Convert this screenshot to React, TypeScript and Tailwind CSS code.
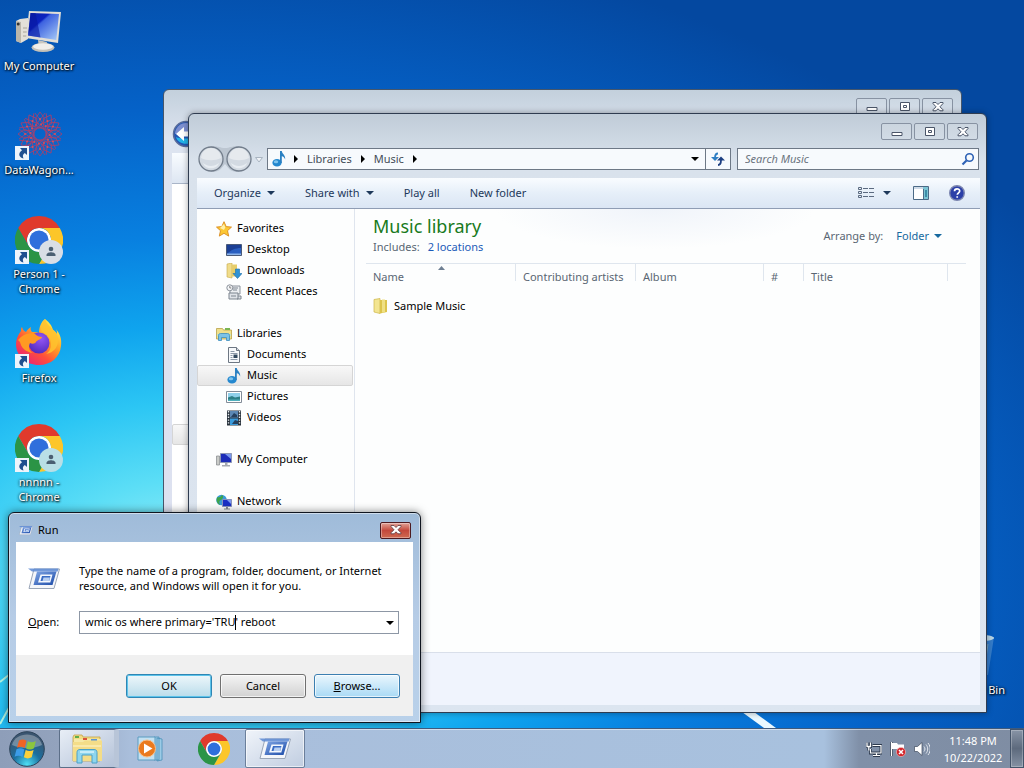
import { ReactNode, useId } from "react";

const ChromeIcon = ({ className = "" }: { className?: string }) => (
  <svg viewBox="0 0 48 48" className={className}>
    <circle cx="24" cy="24" r="12" fill="#fff" />
    <path
      d="M24,12H44.7812a23.9939,23.9939,0,0,0-41.5639.0029L13.6079,30l.0093-.0024A11.9852,11.9852,0,0,1,24,12Z"
      fill="#e03a2c"
    />
    <path
      d="M34.3913,30.0029,24.0007,48A23.994,23.994,0,0,0,44.78,12.0031H23.9989l-.0025.0093A11.985,11.985,0,0,1,34.3913,30.0029Z"
      fill="#fcc629"
    />
    <path
      d="M13.6086,30.0031,3.218,12.006A23.994,23.994,0,0,0,24.0025,48L34.3931,30.0029l-.0067-.0068a11.9852,11.9852,0,0,1-20.7778.007Z"
      fill="#2b9446"
    />
    <circle cx="24" cy="24" r="9.6" fill="#2f6fdc" />
  </svg>
);

const ChromeProfileIcon = ({ tint }: { tint: string }) => (
  <div className="relative h-12 w-12">
    <ChromeIcon className="h-12 w-12" />
    <svg viewBox="0 0 24 24" className="absolute right-0 bottom-0 h-6 w-6">
      <circle cx="12" cy="12" r="12" fill={tint} />
      <circle cx="12" cy="9" r="2.3" fill="#4b5f72" />
      <path d="M7.5 16v-1.2c0-1.7 3-2.5 4.5-2.5s4.500.8 4.500 2.500V16z" fill="#4b5f72" />
    </svg>
  </div>
);

const ComputerIcon = () => {
  const id = useId();
  return (
    <svg viewBox="0 0 48 48" className="h-12 w-12">
      <defs>
        <linearGradient id={id} x1="0" y1="0" x2="1" y2="1">
          <stop offset="0" stopColor="#0a1fa8" />
          <stop offset=".35" stopColor="#0b22c0" />
          <stop offset=".4" stopColor="#3d62e0" />
          <stop offset="1" stopColor="#a9cdf8" />
        </linearGradient>
      </defs>
      <path d="M1 13l4-2 8-1v21l-7 4-5-2z" fill="#e3e0d8" />
      <path d="M1 13l5 1v21l-5-2z" fill="#b9b5aa" />
      <circle cx="3.200" cy="16" r="1.500" fill="#333" />
      <path d="M8 20h4M8 24h4M8 28h4" stroke="#a8a498" />
      <path d="M23 32l9 2-1 6h-7z" fill="#c9c6be" />
      <ellipse cx="28" cy="39.500" rx="11.500" ry="4.500" fill="#c4c1b8" />
      <ellipse cx="28" cy="38.500" rx="10" ry="3.300" fill="#f0eeea" />
      <path d="M14 3l32 1-3 31-32-5z" fill="#e0ded8" />
      <path d="M15.500 5l28.500 1-2.700 26-28.300-4.500z" fill={`url(#${id})`} />
      <path d="M15.500 5h5l5 24.500-12.500-2z" fill="#0718a0" opacity=".6" />
    </svg>
  );
};

const DataWagonIcon = () => (
  <svg viewBox="0 0 48 48" className="h-12 w-12" fill="none" stroke="#a8406c" strokeWidth=".8">
    {[0, 30, 60, 90, 120, 150, 180, 210, 240, 270, 300, 330].map((angle) => (
      <g key={angle} transform={`rotate(${angle} 25 22)`}>
        <path d="M25 0l5 7-5 7-5-7zM20 1l9 12M30 1l-9 12" />
        <path d="M20 13l10 4" />
        <circle cx="25" cy="7" r="1" fill="#d9505c" stroke="none" />
        <circle cx="21" cy="13" r=".9" fill="#d9505c" stroke="none" />
      </g>
    ))}
    <circle cx="25" cy="22" r="6" />
  </svg>
);

const FirefoxIcon = () => {
  const id = useId();
  return (
    <svg viewBox="0 2 48 48" className="h-12 w-12 overflow-visible">
      <defs>
        <linearGradient id={`${id}a`} x1=".9" y1=".1" x2=".2" y2="1">
          <stop offset="0" stopColor="#fff14a" />
          <stop offset=".35" stopColor="#ffa526" />
          <stop offset=".65" stopColor="#ff4f3a" />
          <stop offset="1" stopColor="#e8207a" />
        </linearGradient>
        <radialGradient id={`${id}b`} cx=".6" cy=".3" r=".8">
          <stop offset="0" stopColor="#9355f5" />
          <stop offset="1" stopColor="#4a27b8" />
        </radialGradient>
      </defs>
      <path
        d="M30 1c5 4 7 7 8 11 2 1 3 2 4 4 0-2 0-3-1-5 4 5 6 10 5 17-1 11-10 19-22 19C11 47 1 38 1 26c0-5 2-9 5-13 0-2 0-3 1-4 1 3 2 4 4 5 1-2 3-4 5-5-1 2 0 4 1 5 3 0 5 0 7 1 0-6 2-11 6-14z"
        fill={`url(#${id}a)`}
      />
      <circle cx="24" cy="25" r="10.500" fill={`url(#${id}b)`} />
      <path
        d="M3 22c5-6 11-8 17-6 2 2 4 3 7 3 0 2-5 3-6 5s-4 2-6 1c-2 4-1 8 3 10-8-1-12-6-13-11z"
        fill="#ff9a22"
      />
      <path d="M30 1c-4 4-5 9-3 13 5 2 9 6 9 12 0 5-2 8-5 10 8-1 13-8 12-16-1-8-11-11-13-19z" fill="#ffc22e" opacity=".85" />
    </svg>
  );
};

const RecycleBinIcon = () => (
  <svg viewBox="0 0 48 48" className="h-12 w-12">
    <path d="M8 5h34l-6 38H14z" fill="#6fa6dc" opacity=".45" />
    <ellipse cx="25" cy="6" rx="17" ry="3.500" fill="#b9d6e6" />
    <path d="M14 12l4 28M25 12v29M36 12l-4 28" stroke="#6f9fbd" />
  </svg>
);

const ShortcutArrow = () => (
  <svg viewBox="0 0 14 14" className="absolute bottom-0 left-0 h-[14px] w-[14px]">
    <path d="M0 0h14v14H0z" fill="#eef4fb" />
    <path d="M5 2h7v7L9.800 7C7.500 8.500 7.500 10 8.500 12.500 4 11.500 2.500 7.500 7 4.300z" fill="#1f4f8f" />
  </svg>
);

const RunIcon = ({ className = "" }: { className?: string }) => {
  const id = useId();
  return (
    <svg viewBox="0 0 32 24" className={className}>
      <defs>
        <linearGradient id={id} x1="0" y1="0" x2="1" y2="1">
          <stop offset="0" stopColor="#7fa5e4" />
          <stop offset="1" stopColor="#1c4ba8" />
        </linearGradient>
      </defs>
      <path d="M6 2h25.500L26 21.500H1z" fill="#f4f6fa" stroke="#9aa6b8" />
      <path d="M0 1.500h30.500l-.8 3H4z" fill="#5c8ad4" opacity=".85" />
      <path d="M9 4.500H28.500l-4 13.500H5.500z" fill={`url(#${id})`} />
      <path d="M12.500 7.500h12L22.300 15.500H10z" fill="#f4f8fe" />
      <path d="M14 9h8.500l-1.300 5h-8.700z" fill="#3a6cc4" />
      <path d="M15.500 10.500h6.500l-1 3.500h-6.500z" fill="#b8cff2" />
    </svg>
  );
};

const MusicIcon = ({ className = "" }: { className?: string }) => (
  <svg viewBox="0 0 16 16" className={className}>
    <ellipse cx="6" cy="11.800" rx="4.600" ry="3.800" fill="#2488cf" />
    <ellipse cx="5" cy="10.800" rx="2.200" ry="1.500" fill="#7fc4ee" />
    <path d="M9 0h1.800c.3 3 3.700 3.500 3.400 8.500-.8-2-1.700-3-3.400-3.200V12H9z" fill="#2a80c2" />
  </svg>
);

const icon16 = "h-4 w-4 shrink-0";

const StarIcon = () => (
  <svg viewBox="0 0 16 16" className={icon16}>
    <path d="M8 .7l2.200 4.900 5.300.5-4 3.600 1.200 5.400L8 12.300l-4.700 2.800 1.200-5.400-4-3.600 5.300-.5z" fill="#fbc733" stroke="#d98a1e" strokeWidth=".9" />
    <path d="M8 3l1.300 3.500L8 9 4 7z" fill="#fff0a8" />
  </svg>
);

const DesktopIcon = () => (
  <svg viewBox="0 0 16 16" className={icon16}>
    <path d="M.5 2.500h15v11H.5z" fill="#2a5fc0" stroke="#4a5a78" />
    <path d="M1 3h14v3C9 6 5 8 1 12z" fill="#1b3f94" />
    <path d="M1 11.500h14V13H1z" fill="#8db4e8" />
  </svg>
);

const DownloadsIcon = () => (
  <svg viewBox="0 0 16 16" className={icon16}>
    <path d="M1 1l5-1v15l-5-1z" fill="#f0dc8a" stroke="#c6aa48" strokeWidth=".6" />
    <path d="M6 1.500h5v12H6z" fill="#e6cd6a" />
    <path d="M9.500 6h4v4.500H16L11.500 15.500 7 10.500h2.500z" fill="#2f93d6" stroke="#1b6eaa" strokeWidth=".6" />
  </svg>
);

const RecentIcon = () => (
  <svg viewBox="0 0 16 16" className={icon16}>
    <path d="M4 2h10v8H4z" fill="#eceff2" stroke="#8b929b" />
    <path d="M3 9h9v6H3zM12 12h3v3h-4" fill="#dfe3e8" stroke="#7d858f" />
    <path d="M7 4h5M7 6h4M5 12h5" stroke="#7d858f" />
    <circle cx="3.800" cy="3.800" r="3" fill="#f6f7f9" stroke="#8b929b" />
    <path d="M3.800 2v2h1.500" stroke="#555" fill="none" strokeWidth=".7" />
  </svg>
);

const LibrariesIcon = () => (
  <svg viewBox="0 0 16 16" className={icon16}>
    <path d="M.5 2.500h6l1 1.500h8v9H.5z" fill="#efe08c" stroke="#b9a248" strokeWidth=".8" />
    <path d="M9 2h5v2H9z" fill="#79b552" />
    <path d="M1 8h14v2H1z" fill="#c8e4c0" />
    <path d="M2.500 14.500V9.500c0-1.500 1-2 2-2h7c1 0 2 .5 2 2v5h-3v-3h-5v3z" fill="#7cc3e8" stroke="#3c8dbd" strokeWidth=".8" />
  </svg>
);

const DocumentIcon = () => (
  <svg viewBox="0 0 16 16" className={icon16}>
    <path d="M2.500.5h8l3 3v12h-11z" fill="#f7f9fb" stroke="#6d7783" />
    <path d="M10.500.5v3h3" fill="#d4dae2" stroke="#6d7783" />
    <path d="M4.500 4.500h4M4.500 6.500h7M4.500 8.500h2M4.500 10.500h2M4.500 12.500h7" stroke="#8c98a8" />
    <path d="M7.500 7.500h4v3.500h-4z" fill="#33495e" />
  </svg>
);

const PicturesIcon = () => (
  <svg viewBox="0 0 16 16" className={icon16}>
    <path d="M.5 2.500h15v11H.5z" fill="#fff" stroke="#828c98" />
    <path d="M2 4h12v8H2z" fill="#8fd0ea" />
    <path d="M2 8.500l4-1.500 3 1.500 5-1V12H2z" fill="#2d7f86" />
    <path d="M2 10.500h12V12H2z" fill="#4fb0bd" />
  </svg>
);

const VideosIcon = () => (
  <svg viewBox="0 0 16 16" className={icon16}>
    <path d="M1 .5h14v15H1z" fill="#28323c" />
    <path d="M4 1h8v6.500H4z" fill="#5c88b4" />
    <path d="M4 8.500h8V15H4z" fill="#3a9bdc" />
    <path d="M5 7l3-4 3 2v2zM6 14l3-4 3 1v3z" fill="#25405e" />
    <path d="M2.500 1v14M13.500 1v14" stroke="#e8edf2" strokeWidth="1.400" strokeDasharray="1.400 1.400" />
  </svg>
);

const SmallComputerIcon = () => (
  <svg viewBox="0 0 16 16" className={icon16}>
    <path d="M.5 4h3v9h-3z" fill="#c9cbc8" stroke="#82868a" strokeWidth=".7" />
    <path d="M4.500 1.500h11v9h-11z" fill="#1c2cb8" stroke="#8d97b5" />
    <path d="M9 2h6v5z" fill="#7897ee" />
    <path d="M9 11h2.500v2H14v1.500H6V13h3z" fill="#a6aab2" />
  </svg>
);

const NetworkIcon = () => (
  <svg viewBox="0 0 16 16" className={icon16}>
    <circle cx="5.500" cy="6" r="5.300" fill="#3a9bd8" />
    <path d="M1.500 3C4 4 5 2 6 1c2 1 1 4-1 5S3 9 4 11C1 9.500-.5 6 1.500 3z" fill="#3da54c" />
    <path d="M6.500 5.500h9v7h-9z" fill="#1a2fc4" stroke="#8791bb" />
    <path d="M11 6h4v4z" fill="#7c98f0" />
    <path d="M10 13h2v1.500h2v1H8v-1h2z" fill="#858b98" />
  </svg>
);

const FolderIcon = () => (
  <svg viewBox="0 0 16 16" className={icon16}>
    <path d="M1 1.500L7 .5v15l-6-1.500z" fill="#f3e591" stroke="#cdb648" strokeWidth=".7" />
    <path d="M7 2h7v12l-7 1.500z" fill="#dcc44c" />
    <path d="M9 1.500h3v13H9z" fill="#efe084" />
  </svg>
);

const Caret = ({ className = "" }: { className?: string }) => (
  <svg viewBox="0 0 8 4" className={`h-1 w-2 shrink-0 ${className}`} fill="currentColor">
    <path d="M0 0h8L4 4z" />
  </svg>
);

const CrumbArrow = () => (
  <svg viewBox="0 0 4 8" className="h-2 w-1 shrink-0 text-black" fill="currentColor">
    <path d="M0 0l4 4-4 4z" />
  </svg>
);

const CaptionButtons = () => (
  <div className="flex gap-[2px] text-[#4a5568]">
    {["Minimize", "Maximize", "Close"].map((label) => (
      <button
        key={label}
        aria-label={label}
        className="flex h-[17px] w-[31px] items-center justify-center rounded-[2px] border border-[#8792a2] bg-white/10"
      >
        <svg viewBox="0 0 12 10" className="h-[10px] w-3" fill="#fff" stroke="currentColor">
          {label === "Minimize" && <path d="M1 5.500h10v3H1z" />}
          {label === "Maximize" && (
            <>
              <path d="M1.500.5h9v8h-9z" />
              <path d="M4.500 3.500h3v2h-3z" />
            </>
          )}
          {label === "Close" && (
            <path d="M1 .5h3l2 2 2-2h3v1L8 4.800l3 3v1H8l-2-2-2 2H1v-1l3-3-3-3.300z" />
          )}
        </svg>
      </button>
    ))}
  </div>
);

type DesktopItemProps = {
  label: string;
  shortcut?: boolean;
  children: ReactNode;
};

const DesktopItem = ({ label, shortcut, children }: DesktopItemProps) => (
  <button className="flex h-[104px] w-[78px] flex-col items-center pt-2 text-white">
    <span className="relative block h-12 w-12">
      {children}
      {shortcut && <ShortcutArrow />}
    </span>
    <span className="mt-[2px] text-center leading-[15px] [text-shadow:1px_1px_2px_#000,0_0_3px_#000]">
      {label}
    </span>
  </button>
);

const sidebar = [
  {
    title: "Favorites",
    icon: <StarIcon />,
    items: [
      { name: "Desktop", icon: <DesktopIcon /> },
      { name: "Downloads", icon: <DownloadsIcon /> },
      { name: "Recent Places", icon: <RecentIcon /> },
    ],
  },
  {
    title: "Libraries",
    icon: <LibrariesIcon />,
    items: [
      { name: "Documents", icon: <DocumentIcon /> },
      { name: "Music", icon: <MusicIcon className={icon16} /> },
      { name: "Pictures", icon: <PicturesIcon /> },
      { name: "Videos", icon: <VideosIcon /> },
    ],
  },
  { title: "My Computer", icon: <SmallComputerIcon />, items: [] },
  { title: "Network", icon: <NetworkIcon />, items: [] },
];

const Sidebar = () => (
  <nav className="flex w-[158px] shrink-0 flex-col gap-[21px] overflow-hidden border-r border-[#dfe5ee] pt-[9px]">
    {sidebar.map((group) => (
      <div key={group.title}>
        <a href="#" className="flex h-[21px] items-center gap-[5px] pl-[19px]">
          {group.icon}
          {group.title}
        </a>
        {group.items.map((item) => (
          <a
            key={item.name}
            href="#"
            className={`mr-px flex h-[21px] items-center gap-[5px] rounded-[2px] border pl-7 ${
              item.name === "Music"
                ? "border-[#d5d5d5] bg-gradient-to-b from-[#f8f8f8] to-[#e6e6e6]"
                : "border-transparent"
            }`}
          >
            {item.icon}
            {item.name}
          </a>
        ))}
      </div>
    ))}
  </nav>
);

const NavButtons = () => (
  <div className="relative flex h-7 w-[66px] shrink-0 items-center">
    <svg viewBox="0 0 66 28" className="h-7 w-[66px]">
      <path d="M14 1c8 0 9 2 14 2s6-2 14-2v26c-8 0-9-2-14-8-5 6-6 8-14 8z" fill="#bcc6d1" />
      {[14, 42].map((cx) => (
        <g key={cx}>
          <circle cx={cx} cy="14" r="12" fill="#d3dae2" stroke="#727d8b" strokeWidth="1.300" />
          <path d={`M${cx - 10} 13a10 10 0 0 1 20 0c-6 3-14 3-20 0z`} fill="#e6eaee" />
          <path d={`M${cx - 8} 18c5 4 11 4 16 0-2 7-14 7-16 0z`} fill="#e8edf2" />
        </g>
      ))}
      <path d="M58.500 12.500h7L62 17z" fill="#f0f3f7" stroke="#a9b4c1" />
    </svg>
    <button aria-label="Back" className="absolute left-0 h-7 w-7" />
    <button aria-label="Forward" className="absolute left-7 h-7 w-7" />
  </div>
);

const AddressBar = () => (
  <div className="flex h-7 items-center">
    <NavButtons />
    <div className="ml-1 flex h-[22px] flex-1 items-center border border-[#6d7886] bg-[#f7fafd] text-[#444c57]">
      <MusicIcon className="mx-[3px] h-4 w-4 shrink-0" />
      <div className="flex flex-1 items-center gap-[9px] pl-1">
        <CrumbArrow />
        <a href="#">Libraries</a>
        <CrumbArrow />
        <a href="#">Music</a>
        <CrumbArrow />
      </div>
      <button aria-label="Previous locations" className="flex h-full w-5 items-center justify-center text-black">
        <Caret />
      </button>
      <button aria-label="Refresh" className="flex h-full w-[25px] items-center justify-center border-l border-[#6d7886]">
        <svg viewBox="0 0 14 14" className="h-[14px] w-[14px]" fill="none" strokeWidth="1.800">
          <path d="M7 1.500C4.500 1.500 4 3 4 6" stroke="#2f7fc4" />
          <path d="M0 5h8L4 9z" fill="#2f7fc4" />
          <path d="M7 13c2.500 0 3-2 3-5" stroke="#1d3f82" />
          <path d="M6 8.500h8l-4-4z" fill="#1d3f82" />
        </svg>
      </button>
    </div>
    <label className="mr-px ml-[6px] flex h-[22px] w-[242px] items-center border border-[#6d7886] bg-[#f7fafd] px-[7px]">
      <input
        aria-label="Search Music"
        placeholder="Search Music"
        className="min-w-0 flex-1 bg-transparent italic outline-none placeholder:text-[#6b7480]"
      />
      <svg viewBox="0 0 14 14" className="-mr-1 h-[14px] w-[14px]" fill="none" stroke="#2e62b5">
        <circle cx="8.500" cy="5.500" r="3.800" strokeWidth="1.600" />
        <path d="M5.500 8.500L1.500 12.500" strokeWidth="2.200" />
      </svg>
    </label>
  </div>
);

const CommandBar = () => (
  <div className="flex h-[31px] items-center border-b border-[#8f9db4] bg-gradient-to-b from-[#f9fcff] via-[#e6eff9] to-[#dbe6f4] pr-[15px] pl-[17px] text-[#1e395b]">
    <button className="flex items-center gap-[6px]">
      Organize <Caret />
    </button>
    <button className="ml-[30px] flex items-center gap-[6px]">
      Share with <Caret />
    </button>
    <button className="ml-[30px]">Play all</button>
    <button className="ml-[30px]">New folder</button>
    <div className="ml-auto flex items-center">
      <button aria-label="Change view">
        <svg viewBox="0 0 16 14" className="h-[14px] w-4" fill="none" stroke="#5b6a80">
          <path d="M.5 1.500h3v2h-3zM.5 5.500h3v2h-3zM.5 9.500h3v2h-3z" />
          <path d="M5 2.500h11M5 6.500h11M5 10.500h11" strokeDasharray="5 1" />
        </svg>
      </button>
      <button aria-label="View options" className="ml-[9px]">
        <Caret />
      </button>
      <button aria-label="Preview pane" className="ml-[22px]">
        <svg viewBox="0 0 16 14" className="h-[14px] w-4">
          <path d="M.5.5h15v13H.5z" fill="#fff" stroke="#4c6a86" />
          <path d="M1 1h14v2H1z" fill="#cfdbe8" />
          <path d="M10 1h5v12h-5z" fill="#7cc4d4" />
          <path d="M12 4h2v7h-2z" fill="#3d8ea8" />
          <path d="M10.500 3v10" stroke="#4c6a86" />
        </svg>
      </button>
      <button aria-label="Help" className="ml-5">
        <svg viewBox="0 0 16 16" className="h-4 w-4">
          <circle cx="8" cy="8" r="7.300" fill="#2b3fa8" stroke="#7c86b0" strokeWidth="1.400" />
          <path
            d="M5.500 6.300c0-3.400 5.200-3.200 5.200-.3 0 1.800-2.400 1.900-2.400 3.800M8.200 11.200v1.600"
            fill="none"
            stroke="#fff"
            strokeWidth="1.700"
          />
        </svg>
      </button>
    </div>
  </div>
);

const columns = [
  { name: "Name", width: "w-[150px]" },
  { name: "Contributing artists", width: "w-[120px]" },
  { name: "Album", width: "w-[128px]" },
  { name: "#", width: "w-[40px]" },
  { name: "Title", width: "w-[144px]" },
];

const LibraryView = () => (
  <main className="flex min-w-0 flex-1 flex-col bg-[radial-gradient(ellipse_160px_40px_at_300px_0px,#f0f4fa_0%,transparent_100%)] pr-[14px] pl-[11px]">
    <div className="flex h-[55px] items-start justify-between border-b border-[#dfe6ee] pl-[7px]">
      <div>
        <h1 className="mt-[5px] text-[18px] leading-6 text-[#187a1c]">Music library</h1>
        <p className="flex gap-2 leading-[17px] text-[#5a6673]">
          Includes:
          <a href="#" className="text-[#1c5bb8]">
            2 locations
          </a>
        </p>
      </div>
      <div className="mt-[19px] mr-6 flex items-center gap-[13px] text-[#5a6673]">
        Arrange by:
        <button className="flex items-center gap-[5px] text-[#17699f]">
          Folder <Caret />
        </button>
      </div>
    </div>
    <table className="w-full table-fixed text-left">
      <thead>
        <tr className="h-[27px] text-[#5a6673]">
          {columns.map((col) => (
            <th
              key={col.name}
              className={`relative pl-[7px] font-normal whitespace-nowrap ${col.width}`}
            >
              {col.name}
              <span className="absolute top-0 right-0 h-[17px] w-px bg-[#dfe6ee]" />
              {col.name === "Name" && (
                <svg viewBox="0 0 7 4" className="absolute top-[2px] left-[72px] h-1 w-[7px]">
                  <path d="M0 4l3.500-4L7 4z" fill="#6e7f92" />
                </svg>
              )}
            </th>
          ))}
          <th />
        </tr>
      </thead>
      <tbody>
        <tr className="h-[30px]">
          <td className="pl-[7px]">
            <a href="#" className="flex items-center gap-[5px] whitespace-nowrap text-black">
              <FolderIcon />
              Sample Music
            </a>
          </td>
          <td colSpan={5} />
        </tr>
      </tbody>
    </table>
  </main>
);

const BackWindow = () => (
  <section className="absolute top-[89px] right-[62px] bottom-10 left-[163px] flex flex-col rounded-t-md border border-[#46566b] bg-gradient-to-b from-[#c3d0dc] via-[#dde4f0] via-8% to-[#dde0f0] pr-[6px] pb-[7px] pl-2">
    <div className="flex h-[35px] shrink-0 justify-end pt-2 pr-[2px]">
      <CaptionButtons />
    </div>
    <div className="flex h-7 shrink-0 items-start">
      <button aria-label="Back" className="-mt-[5px] h-7 w-7">
        <svg viewBox="0 0 28 28" className="h-7 w-7">
          <circle cx="14" cy="14" r="12.500" fill="#2356b4" stroke="#5a6c9a" strokeWidth="1.500" />
          <path d="M3 14a11 11 0 0 1 22 0z" fill="#7d8fd0" />
          <path d="M4 17c4 2 16 2 20 0-2 9-18 9-20 0z" fill="#22b4e8" />
          <path d="M4 14l8-7v4.500h10v5H12V21z" fill="#fff" />
        </svg>
      </button>
    </div>
    <div className="h-[31px] shrink-0 border-b border-[#a9b5c8] bg-gradient-to-b from-[#f9fcff] to-[#dde6f2]" />
    <div className="flex-1 bg-white pt-[240px]">
      <div className="h-[21px] w-[158px] rounded-[2px] border border-[#d5d5d5] bg-gradient-to-b from-[#f8f8f8] to-[#e6e6e6]" />
    </div>
  </section>
);

const MusicWindow = () => (
  <section className="absolute top-[113px] right-[37px] bottom-[15px] left-[188px] flex flex-col rounded-t-md border border-[#2f3c50] bg-gradient-to-b from-[#c0ccd8] via-[#d9e2ec] via-8% to-[#dce5f0] pr-[6px] pb-[7px] pl-2 shadow-[0_0_6px_rgba(0,0,0,0.35)]">
    <div className="flex h-[31px] shrink-0 justify-end pt-[9px] pr-[2px]">
      <CaptionButtons />
    </div>
    <AddressBar />
    <div className="mt-[5px] flex flex-1 flex-col bg-[#fdfefe]">
      <CommandBar />
      <div className="flex flex-1">
        <Sidebar />
        <LibraryView />
      </div>
      <footer className="h-[53px] border-t border-[#d9dfea] bg-[#f0f4fd]" />
    </div>
  </section>
);

const dialogButton =
  "h-6 w-[86px] rounded-[3px] border bg-gradient-to-b text-center shadow-[inset_0_0_0_1px_rgba(255,255,255,0.7)]";

const RunDialog = () => (
  <section className="absolute bottom-[5px] left-2 flex w-[413px] flex-col rounded-t-md border border-[#10151f] bg-gradient-to-b from-[#9fbbd9] via-[#b6cce6] to-[#b9d1ea] px-[7px] pb-[6px] shadow-[inset_0_0_0_1px_rgba(255,255,255,0.5),0_0_8px_rgba(0,0,0,0.5)]">
    <header className="flex h-[29px] items-center gap-[5px] pt-[5px] pr-[2px] pl-[3px]">
      <RunIcon className="h-[11px] w-[14px]" />
      <h2 className="flex-1">Run</h2>
      <button
        aria-label="Close"
        className="flex h-[17px] w-[31px] items-center justify-center rounded-[2px] border border-[#4d1a20] bg-gradient-to-b from-[#e0a298] via-[#c3483c] to-[#cf6a52] shadow-[inset_0_0_0_1px_rgba(255,255,255,0.35)]"
      >
        <svg viewBox="0 0 12 10" className="h-[10px] w-3" fill="#fff" stroke="#5b3a40" strokeWidth=".8">
          <path d="M1 .5h3l2 2 2-2h3v1L8 4.800l3 3v1H8l-2-2-2 2H1v-1l3-3-3-3.300z" />
        </svg>
      </button>
    </header>
    <div className="h-[113px] bg-white pr-[14px] pl-3">
      <div className="flex pt-[21px]">
        <RunIcon className="mt-1 h-6 w-8" />
        <p className="ml-[19px] leading-[15px]">
          Type the name of a program, folder, document, or Internet
          <br />
          resource, and Windows will open it for you.
        </p>
      </div>
      <div className="mt-[18px] flex items-center">
        <label htmlFor="open" className="w-[51px]">
          <span className="underline">O</span>pen:
        </label>
        <div className="relative flex h-[23px] flex-1 items-center border border-[#8d97a5] bg-white">
          <input
            id="open"
            defaultValue="wmic os where primary='TRU' reboot"
            className="min-w-0 flex-1 bg-transparent pl-[5px] outline-none"
          />
          <span className="absolute left-[155px] h-[15px] w-px bg-black" />
          <button aria-label="Show history" className="flex h-full w-4 items-center justify-center">
            <Caret />
          </button>
        </div>
      </div>
    </div>
    <footer className="flex h-[61px] justify-end gap-2 bg-[#f0f0f0] pt-[19px] pr-[13px]">
      <button className={`${dialogButton} border-[#2f86b4] from-[#eef7fb] to-[#b9dcea] ring-1 ring-[#5cc3ea] ring-inset`}>
        OK
      </button>
      <button className={`${dialogButton} border-[#707070] from-[#f4f4f4] to-[#d2d2d2]`}>Cancel</button>
      <button className={`${dialogButton} border-[#3c7fb1] from-[#eaf6fd] to-[#a9daf5]`}>
        <span className="underline">B</span>rowse...
      </button>
    </footer>
  </section>
);

const StartOrb = () => {
  const id = useId();
  return (
    <svg viewBox="0 0 36 36" className="h-9 w-9">
      <defs>
        <radialGradient id={id} cx=".5" cy=".95" r=".8">
          <stop offset="0" stopColor="#4fe0f5" />
          <stop offset=".5" stopColor="#1b6f9f" />
          <stop offset="1" stopColor="#3a5570" />
        </radialGradient>
      </defs>
      <circle cx="18" cy="18" r="17.300" fill={`url(#${id})`} stroke="#2c4258" />
      <path d="M3 14C6 0 30 0 33 14c-8 4-22 4-30 0z" fill="#fff" opacity=".3" />
      <path d="M10 9.500c3-1.500 5-1.200 7.500.2L15.700 17c-2.700-1.400-4.700-1.500-7.700-.3z" fill="#ef6425" />
      <path d="M18.800 10.200c2.700 1.400 5 1.400 8-.2L25 17.300c-2.800 1.600-5.200 1.500-7.900.2z" fill="#8cc63e" />
      <path d="M7.500 18.200c3-1.300 5.200-1 7.800.3L13.500 26c-2.600-1.400-4.900-1.500-7.900-.3z" fill="#3c9ce8" />
      <path d="M16.700 19c2.700 1.400 5 1.400 7.900 0l-1.900 7.300c-2.900 1.500-5.100 1.400-7.800 0z" fill="#fcd03a" />
    </svg>
  );
};

const ExplorerIcon = () => (
  <svg viewBox="0 0 32 30" className="h-[30px] w-8">
    <path d="M2 3l1-2h8l1 2h17v24H2z" fill="#f2dc85" stroke="#c2a24a" strokeWidth=".8" />
    <path d="M3 5h27v22H3z" fill="#f7e9a6" />
    <path d="M4 2h4v2H4z" fill="#5fae4a" />
    <path d="M12 4h4v2h-4z" fill="#d9523b" />
    <path d="M20 5h6v2h-6z" fill="#5b94d4" />
    <path d="M2 8h10l2-1.500h17V27H2z" fill="#f4dd88" />
    <path d="M2 12h28" stroke="#fff6cf" />
    <path d="M6 29V18.500c0-2 1-3 3-3h14c2 0 3 1 3 3V29h-5v-8H11v8z" fill="#8ed6ee" stroke="#4aa0c8" />
    <path d="M9 18h14" stroke="#d8f3fb" strokeWidth="1.500" />
  </svg>
);

const MediaPlayerIcon = () => (
  <svg viewBox="0 0 28 26" className="h-[26px] w-7">
    <path d="M20 2l5 1v21l-5 1zM17 1h5v23h-5z" fill="#9ccbe6" stroke="#4a90b8" strokeWidth=".8" />
    <path d="M1 1h17v23H1z" fill="#c3e1f2" stroke="#5a9cc0" />
    <circle cx="10" cy="12.500" r="8.500" fill="#ea7a1e" stroke="#f7c08a" />
    <path d="M7 7.500l8.500 5L7 17.500z" fill="#fff" />
  </svg>
);

const Taskbar = () => (
  <footer className="flex h-10 shrink-0 items-stretch border-t border-[#3f5a7c] bg-[linear-gradient(to_right,#8e9eb9_0,#93a3bd_60px,#a9bedb_130px,#a8c1de_calc(100%-200px),#8090a8_calc(100%-165px),#7f8da3_100%)] shadow-[inset_0_1px_0_rgba(255,255,255,0.5)]">
    <button aria-label="Start" className="ml-[9px] flex w-9 items-center">
      <StartOrb />
    </button>
    <div className="ml-[14px] flex">
      <button
        aria-label="Windows Explorer"
        className="flex w-[60px] items-center justify-center rounded-[2px] border border-r-[5px] border-[#5c6f88] border-r-[#b8c5d8] bg-gradient-to-br from-[#e8eef6] to-[#b4c2d8]"
      >
        <ExplorerIcon />
      </button>
      <button aria-label="Windows Media Player" className="flex w-16 items-center justify-center">
        <MediaPlayerIcon />
      </button>
      <button aria-label="Google Chrome" className="flex w-[62px] items-center justify-center">
        <ChromeIcon className="h-8 w-8" />
      </button>
      <button
        aria-label="Run"
        className="flex w-[60px] items-center justify-center rounded-[2px] border border-[#6b7f9b] bg-gradient-to-br from-[#f0f4fa] to-[#c0cde0] shadow-[inset_0_0_0_1px_rgba(255,255,255,0.6)]"
      >
        <RunIcon className="h-6 w-8" />
      </button>
    </div>
    <div className="ml-auto flex items-center gap-2">
      <svg viewBox="0 0 16 16" className="h-4 w-4" fill="none">
        <path d="M4.500 8v4H15V4.500H6.500M7 14.500h7M10.500 12v2" stroke="#2d3a4e" strokeWidth="3" />
        <path d="M1 1.500v4h3.500v-4M2.800 5.500v4" stroke="#2d3a4e" strokeWidth="3" />
        <path d="M4.500 8v4H15V4.500H6.500M7 14.500h7M10.500 12v2" stroke="#fff" strokeWidth="1.200" />
        <path d="M1 1.500v4h3.500v-4M2.800 5.500v4" stroke="#fff" strokeWidth="1.300" />
      </svg>
      <svg viewBox="0 0 16 16" className="h-4 w-4">
        <path d="M1.500 1v14" stroke="#2d3a4e" strokeWidth="3" />
        <path d="M1.500 1v14" stroke="#fff" strokeWidth="1.400" />
        <path d="M2 2h5l1 1.500h6V9H8L7 8H2z" fill="#fff" />
        <circle cx="11" cy="11" r="4.600" fill="#d3262c" stroke="#f3c4c4" strokeWidth=".6" />
        <path d="M9 9l4 4M13 9l-4 4" stroke="#fff" strokeWidth="1.500" />
      </svg>
      <svg viewBox="0 0 16 16" className="h-4 w-4">
        <path d="M.5 5.500h3L8 1.500v13l-4.500-4h-3z" fill="#fff" stroke="#3c495c" strokeWidth=".7" />
        <path d="M10 5.500c1.300 1.500 1.300 3.500 0 5M12 3.500c2.300 2.700 2.300 6.300 0 9M14 2c3 4 3 8 0 12" fill="none" stroke="#e4e9f0" />
      </svg>
      <div className="ml-1 w-[62px] text-center leading-[17px] text-white">
        <div>11:48 PM</div>
        <div>10/22/2022</div>
      </div>
    </div>
    <button
      aria-label="Show desktop"
      className="ml-[6px] w-[14px] border border-[#44546a] bg-gradient-to-b from-[#8894a6] via-[#5d6a7d] to-[#8591a3] shadow-[inset_0_0_0_1px_rgba(255,255,255,0.25)]"
    />
  </footer>
);

export default function App() {
  return (
    <div className="flex h-screen flex-col overflow-hidden font-['Noto_Sans',sans-serif] text-[11px] text-black select-none">
      <div className="relative flex-1 overflow-hidden bg-[radial-gradient(ellipse_1000px_640px_at_190px_570px,#a6f2f8_0%,#5cdef6_14%,#2cc6f4_26%,#0fa4ee_38%,#0880e0_52%,#0562c8_72%,#0448a0_100%)]">
        <svg viewBox="0 0 60 16" className="absolute right-[238px] bottom-0 h-4 w-[60px]">
          <path d="M16 0h12l22 16H38z" fill="#e9f8ff" />
        </svg>
        <svg viewBox="0 0 10 60" className="absolute bottom-0 left-0 h-[60px] w-[10px]" fill="none">
          <path d="M0 14l10-8M0 56l10-18" stroke="#b4f4e4" strokeWidth="2" />
        </svg>
        <div className="flex w-[78px] flex-col">
          <DesktopItem label="My Computer">
            <ComputerIcon />
          </DesktopItem>
          <DesktopItem label="DataWagon..." shortcut>
            <DataWagonIcon />
          </DesktopItem>
          <DesktopItem label="Person 1 - Chrome" shortcut>
            <ChromeProfileIcon tint="#d9dee6" />
          </DesktopItem>
          <DesktopItem label="Firefox" shortcut>
            <FirefoxIcon />
          </DesktopItem>
          <DesktopItem label="nnnnn - Chrome" shortcut>
            <ChromeProfileIcon tint="#b9dfe6" />
          </DesktopItem>
        </div>
        <div className="absolute right-[9px] bottom-0">
          <DesktopItem label="Recycle Bin">
            <RecycleBinIcon />
          </DesktopItem>
        </div>
        <BackWindow />
        <MusicWindow />
        <RunDialog />
      </div>
      <Taskbar />
    </div>
  );
}
